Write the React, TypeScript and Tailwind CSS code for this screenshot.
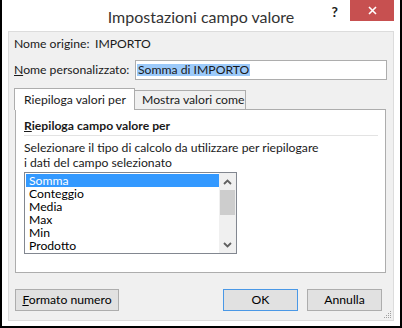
import React from "react";

const items = ["Somma", "Conteggio", "Media", "Max", "Min", "Prodotto"];

function Chevron({ up }: { up?: boolean }) {
  return (
    <svg width="9" height="6" viewBox="0 0 9 6" className="block">
      <path
        d={up ? "M1 5 L4.5 1.5 L8 5" : "M1 1 L4.5 4.5 L8 1"}
        fill="none"
        stroke="#606060"
        strokeWidth="1.8"
      />
    </svg>
  );
}

function Button({ children, primary, className = "" }: { children: React.ReactNode; primary?: boolean; className?: string }) {
  return (
    <div
      className={`flex h-[22px] items-center justify-center whitespace-nowrap border bg-[#e1e1e1] text-black ${
        primary ? "border-[#4a98e6]" : "border-[#adadad]"
      } ${className}`}
    >
      {children}
    </div>
  );
}

export default function App() {
  return (
    <div className="flex h-[328px] w-[402px] flex-col overflow-hidden border-x-2 border-b-2 border-black bg-white font-['Lato',sans-serif] text-[12.2px] leading-[16px] text-[#1a1a1a]">
      {/* title bar */}
      <div className="grid h-[31px] shrink-0 grid-cols-[1fr_auto_1fr]">
        <div />
        <div className="whitespace-nowrap pt-[7px] text-[16px] leading-[20px] text-[#333]">
          Impostazioni campo valore
        </div>
        <div className="flex items-start justify-end">
          <span className="mr-[12px] pt-[4px] text-[14px] font-bold leading-[16px] text-[#222]">?</span>
          <div className="mr-[6px] flex h-[21px] w-[44px] items-center justify-center bg-[#c75050]">
            <svg width="9" height="9" viewBox="0 0 9 9">
              <path d="M1 1 L8 8 M8 1 L1 8" stroke="#fff" strokeWidth="1.6" />
            </svg>
          </div>
        </div>
      </div>

      {/* dialog body */}
      <div className="relative mx-[6px] h-[290px] shrink-0 border border-[#dcdcdc] bg-[#f0f0f0] px-[5px] pt-[4px]">
        <div className="flex h-[16px] items-center whitespace-nowrap">
          <span className="w-[81px]">Nome origine:</span>
          <span>IMPORTO</span>
        </div>

        <div className="mt-[8px] flex items-center whitespace-nowrap">
          <span className="w-[121px]">
            <u>N</u>ome personalizzato:
          </span>
          <div className="flex h-[20px] w-[252px] items-center border border-[#adadad] bg-white pl-[1px]">
            <span className="bg-[#9ccafa] px-[1px] leading-[12px]">Somma di IMPORTO</span>
          </div>
        </div>

        {/* tabs */}
        <div className="mt-[8px] flex items-end whitespace-nowrap">
          <div className="relative z-10 -mb-px flex h-[22px] w-[121px] items-center border-x border-t border-[#adadad] bg-white pl-[9px]">
            Riepiloga valori per
          </div>
          <div className="flex h-[19px] w-[111px] items-center border-r border-t border-[#adadad] bg-[#f0f0f0] pl-[7px]">
            Mostra valori come
          </div>
        </div>
        <div className="ml-px h-[164px] w-[371px] border border-[#adadad] bg-white pl-[8px] pr-[7px] pt-[8px]">
          <div className="h-[16px] whitespace-nowrap font-bold">
            <u>R</u>iepiloga campo valore per
          </div>
          <div className="mt-[1px] h-px bg-[#e3e3e3]" />
          <div className="mt-[4px] whitespace-nowrap leading-[15px]">
            Selezionare il tipo di calcolo da utilizzare per riepilogare
            <br />i dati del campo selezionato
          </div>
          <div className="mt-[2px] flex h-[82px] w-[213px] border border-[#828790] bg-white">
            <div className="flex-1 pl-px pt-px">
              {items.map((it, i) => (
                <div
                  key={it}
                  className={`h-[13px] pl-[3px] leading-[13px] ${i === 0 ? "bg-[#3399ff] text-white" : "text-black"}`}
                >
                  {it}
                </div>
              ))}
            </div>
            <div className="flex w-[17px] flex-col bg-[#f0f0f0]">
              <div className="flex h-[17px] items-center justify-center">
                <Chevron up />
              </div>
              <div className="mx-px h-[25px] bg-[#cdcdcd]" />
              <div className="flex-1" />
              <div className="flex h-[17px] items-center justify-center">
                <Chevron />
              </div>
            </div>
          </div>
        </div>

        {/* buttons */}
        <div className="mt-[16px] flex items-center">
          <Button className="ml-px w-[104px]">
            <span>
              <u>F</u>ormato numero
            </span>
          </Button>
          <div className="flex-1" />
          <Button primary className="w-[75px]">
            OK
          </Button>
          <Button className="ml-[9px] mr-[6px] w-[75px]">Annulla</Button>
        </div>

        <svg width="9" height="9" viewBox="0 0 9 9" className="absolute bottom-[1px] right-[1px]">
          <g fill="#a0a0a0">
            <rect x="7" y="1" width="1" height="1" />
            <rect x="5" y="3" width="1" height="1" />
            <rect x="7" y="3" width="1" height="1" />
            <rect x="3" y="5" width="1" height="1" />
            <rect x="5" y="5" width="1" height="1" />
            <rect x="7" y="5" width="1" height="1" />
            <rect x="1" y="7" width="1" height="1" />
            <rect x="3" y="7" width="1" height="1" />
            <rect x="5" y="7" width="1" height="1" />
            <rect x="7" y="7" width="1" height="1" />
          </g>
        </svg>
      </div>
    </div>
  );
}
